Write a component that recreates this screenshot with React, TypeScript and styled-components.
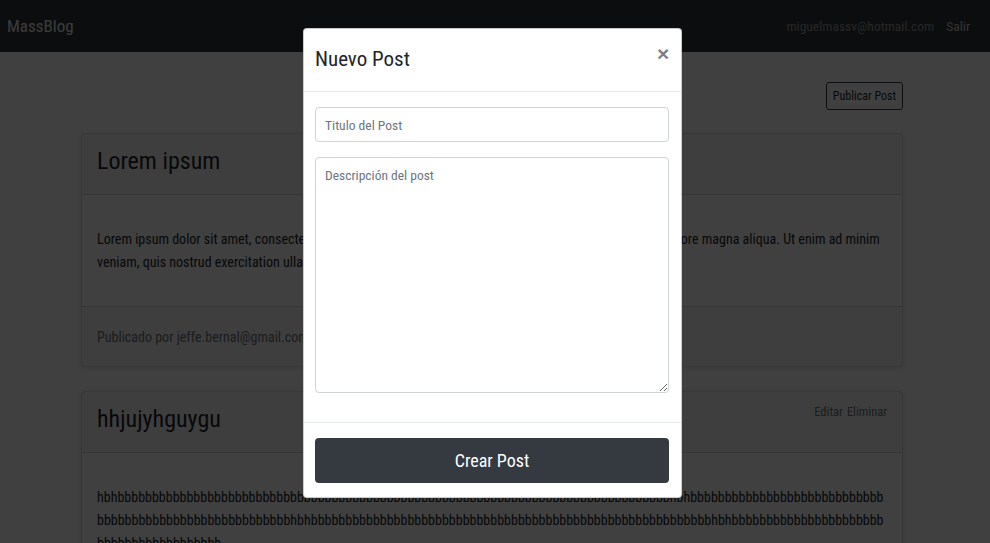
import React from "react";
import styled, { createGlobalStyle } from "styled-components";

const Global = createGlobalStyle`
  html, body { margin: 0; padding: 0; }
  body {
    font-family: "Roboto Condensed", "Liberation Sans", sans-serif;
    color: #212529;
    background: #fff;
    overflow: hidden;
  }
  * { box-sizing: border-box; }
`;

const Page = styled.div`
  position: relative;
  width: 990px;
  height: 543px;
  overflow: hidden;
`;

const Navbar = styled.nav`
  height: 52px;
  background: #2f343a;
  display: flex;
  align-items: center;
  justify-content: space-between;
  padding: 0 20px 0 7px;
`;

const Brand = styled.span`
  font-size: 17px;
  color: #fff;
  opacity: 0.9;
`;

const NavRight = styled.div`
  display: flex;
  gap: 12px;
  font-size: 13.5px;
`;

const NavLink = styled.span<{ $bright?: boolean }>`
  color: ${(p) => (p.$bright ? "rgba(255,255,255,.75)" : "rgba(255,255,255,.5)")};
`;

const Main = styled.main`
  padding: 30px 87px 0 81px;
  display: flex;
  flex-direction: column;
`;

const Toolbar = styled.div`
  display: flex;
  justify-content: flex-end;
  margin-bottom: 23px;
`;

const OutlineButton = styled.button`
  font-family: inherit;
  font-size: 12px;
  color: #212529;
  background: transparent;
  border: 1px solid #343a40;
  border-radius: 3px;
  height: 28px;
  padding: 0 6px;
`;

const Card = styled.section`
  border: 1px solid rgba(0, 0, 0, 0.125);
  border-radius: 4px;
  box-shadow: 0 1px 6px rgba(0, 0, 0, 0.12);
  margin-bottom: 24px;
  background: #fff;
`;

const CardHeader = styled.header`
  background: rgba(0, 0, 0, 0.03);
  border-bottom: 1px solid rgba(0, 0, 0, 0.125);
  height: 61px;
  padding: 0 15px;
  display: flex;
  justify-content: space-between;
  align-items: flex-start;
`;

const CardTitle = styled.h2`
  margin: 12px 0 0;
  font-size: 24px;
  font-weight: 400;
  line-height: 30px;
`;

const Actions = styled.div`
  margin-top: 12px;
  font-size: 12.5px;
  color: #6c757d;
  display: flex;
  gap: 4px;
`;

const CardBody = styled.div`
  padding: 33px 15px 32px;
  font-size: 14px;
  line-height: 23px;
`;

const Paragraph = styled.p<{ $breakAll?: boolean }>`
  margin: 0;
  word-break: ${(p) => (p.$breakAll ? "break-all" : "normal")};
`;

const CardFooter = styled.footer`
  background: rgba(0, 0, 0, 0.03);
  border-top: 1px solid rgba(0, 0, 0, 0.125);
  height: 60px;
  padding: 0 15px;
  display: flex;
  align-items: center;
  font-size: 14px;
  color: #6c757d;
`;

const Backdrop = styled.div`
  position: absolute;
  inset: 0;
  background: rgba(0, 0, 0, 0.75);
`;

const Modal = styled.div`
  position: absolute;
  left: 303px;
  top: 28px;
  width: 379px;
  background: #fff;
  border-radius: 4px;
  border: 1px solid rgba(0, 0, 0, 0.2);
`;

const ModalHeader = styled.div`
  height: 63px;
  border-bottom: 1px solid #e9ecef;
  display: flex;
  justify-content: space-between;
  align-items: flex-start;
  padding: 0 12px 0 11px;
`;

const ModalTitle = styled.h5`
  margin: 17px 0 0;
  font-size: 21px;
  font-weight: 400;
  line-height: 26px;
  color: #212529;
`;

const Close = styled.button`
  margin-top: 14px;
  border: 0;
  background: transparent;
  font-family: "Liberation Sans", Arial, sans-serif;
  font-size: 21px;
  font-weight: 700;
  color: #000;
  opacity: 0.5;
  padding: 0;
  line-height: 1;
  width: 12px;
`;

const ModalBody = styled.div`
  padding: 15px 12px 29px 11px;
  display: flex;
  flex-direction: column;
  gap: 15px;
`;

const Field = styled.input`
  height: 35px;
  border: 1px solid #ced4da;
  border-radius: 4px;
  padding: 0 9px;
  font-family: inherit;
  font-size: 13.5px;
  color: #495057;
  &::placeholder { color: #6c757d; }
`;

const TextArea = styled.textarea`
  height: 236px;
  border: 1px solid #ced4da;
  border-radius: 4px;
  padding: 6px 9px;
  font-family: inherit;
  font-size: 13.5px;
  line-height: 22px;
  resize: vertical;
  &::placeholder { color: #6c757d; }
`;

const ModalFooter = styled.div`
  border-top: 1px solid #e9ecef;
  padding: 15px 12px 14px 11px;
  display: flex;
`;

const PrimaryButton = styled.button`
  flex: 1;
  height: 45px;
  background: #343a40;
  color: #fff;
  border: 0;
  border-radius: 4px;
  font-family: inherit;
  font-size: 18px;
`;

const b = (n: number) => "b".repeat(n);
const longText =
  "hbh" + b(80) + "hbh" + b(42) + b(14) + "hbh" + b(58) + "hbh" + b(40);

export default function App() {
  return (
    <>
      <Global />
      <Page>
        <Navbar>
          <Brand>MassBlog</Brand>
          <NavRight>
            <NavLink>miguelmassv@hotmail.com</NavLink>
            <NavLink $bright>Salir</NavLink>
          </NavRight>
        </Navbar>
        <Main>
          <Toolbar>
            <OutlineButton>Publicar Post</OutlineButton>
          </Toolbar>
          <Card>
            <CardHeader>
              <CardTitle>Lorem ipsum</CardTitle>
            </CardHeader>
            <CardBody>
              <Paragraph>
                Lorem ipsum dolor sit amet, consectetur adipiscing elit, sed do eiusmod tempor
                incididunt ut labore et dolore magna aliqua. Ut enim ad minim veniam, quis nostrud
                exercitation ullamco laboris nisi ut aliquip ex ea commodo consequat.
              </Paragraph>
            </CardBody>
            <CardFooter>Publicado por jeffe.bernal@gmail.com</CardFooter>
          </Card>
          <Card>
            <CardHeader>
              <CardTitle>hhjujyhguygu</CardTitle>
              <Actions>
                <span>Editar</span>
                <span>Eliminar</span>
              </Actions>
            </CardHeader>
            <CardBody>
              <Paragraph $breakAll>{longText}</Paragraph>
            </CardBody>
          </Card>
        </Main>
        <Backdrop />
        <Modal>
          <ModalHeader>
            <ModalTitle>Nuevo Post</ModalTitle>
            <Close aria-label="Close">×</Close>
          </ModalHeader>
          <ModalBody>
            <Field placeholder="Titulo del Post" />
            <TextArea placeholder="Descripción del post" />
          </ModalBody>
          <ModalFooter>
            <PrimaryButton>Crear Post</PrimaryButton>
          </ModalFooter>
        </Modal>
      </Page>
    </>
  );
}
